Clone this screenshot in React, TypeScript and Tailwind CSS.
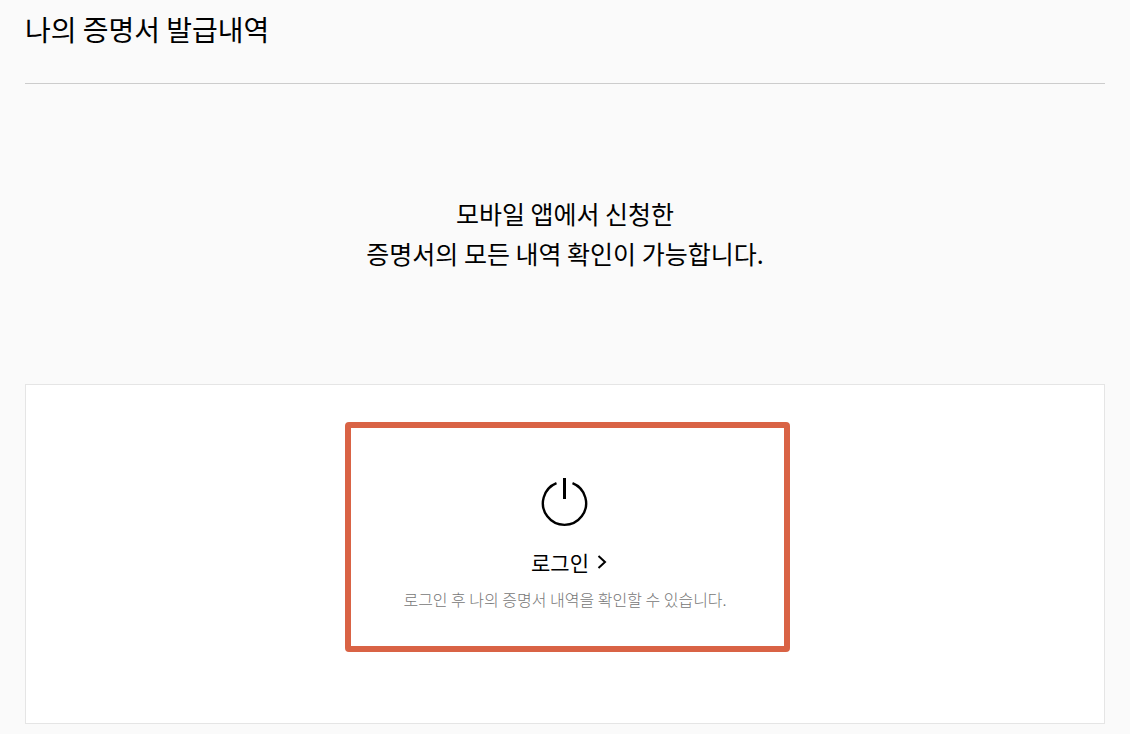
const PowerIcon = () => (
  <svg width="48" height="50" viewBox="0 0 48 50" fill="none" stroke="#000" strokeWidth="2.4" aria-hidden="true">
    <path d="M15.5 6.2A21.6 21.6 0 1 0 31.5 6.2" />
    <path d="M23.5 1v21" strokeWidth="3" />
  </svg>
)

const ArrowIcon = () => (
  <svg width="10" height="14" viewBox="0 0 10 14" fill="none" stroke="#000" strokeWidth="2" aria-hidden="true">
    <path d="M1.5 1l6.5 6-6.5 6" />
  </svg>
)

const App = () => {
  return (
    <div className="min-h-screen bg-[#fafafa] px-[25px] pb-[10px] font-['Noto_Sans_CJK_KR',sans-serif] text-black">
      <header className="border-b border-[#cccccc] pt-[9px] pb-[34px]">
        <h1 className="text-[28px] leading-[40px]">나의 증명서 발급내역</h1>
      </header>
      <main>
        <p className="pt-[109px] pb-[111px] text-center text-[25px] leading-[40px]">
          모바일 앱에서 신청한
          <br />
          증명서의 모든 내역 확인이 가능합니다.
        </p>
        <section className="flex h-[340px] justify-center border border-[#e5e5e5] bg-white pt-[37px] pr-4 pl-5">
          <div className="flex h-[230px] w-[445px] flex-col items-center rounded-[4px] border-6 border-[#d96345] pt-[49px] pr-1">
            <a href="#login" className="flex flex-col items-center">
              <PowerIcon />
              <span className="mt-5 flex items-center gap-2 pl-2 text-[21px] leading-[30px]">
                로그인
                <ArrowIcon />
              </span>
            </a>
            <p className="mt-3 text-[16px] leading-[20px] font-light text-[#777777]">
              로그인 후 나의 증명서 내역을 확인할 수 있습니다.
            </p>
          </div>
        </section>
      </main>
    </div>
  )
}

export default App
